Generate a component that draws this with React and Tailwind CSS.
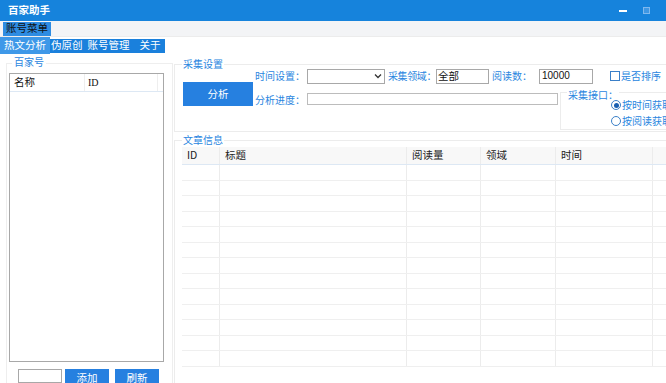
import React from "react";

const F = { fontFamily: '"Noto Sans CJK SC", "Microsoft YaHei", "Noto Sans", sans-serif' };

function Row({ header }) {
  const cells = header ? ["ID", "标题", "阅读量", "领域", "时间", ""] : ["", "", "", "", "", ""];
  const widths = ["w-[38px]", "w-[187px]", "w-[74px]", "w-[75px]", "w-[97px]", "flex-1"];
  return (
    <div className={`flex ${header ? "h-[18px] bg-[#f8f8f8] border-b border-[#dde8f4]" : "h-[15.5px] border-b border-[#efefef]"}`}>
      {cells.map((c, i) => (
        <div
          key={i}
          className={`${widths[i]} shrink-0 ${i < 5 ? "border-r border-[#ececec]" : ""} pl-[5px] flex items-center text-[10.5px] text-[#222] leading-none whitespace-nowrap`}
        >
          {c}
        </div>
      ))}
    </div>
  );
}

const lbl = "text-[10px] text-[#2a86e0] leading-none whitespace-nowrap";

export default function App() {
  return (
    <div className="w-[666px] h-[383px] overflow-hidden bg-white flex flex-col select-none" style={F}>
      {/* title bar */}
      <div className="h-[21px] bg-[#1683dc] flex items-center pl-[8px] shrink-0">
        <span className="text-white text-[10.5px] font-bold leading-none">百家助手</span>
        <div className="ml-auto flex items-center gap-[16px] mr-[16px]">
          <div className="w-[8px] h-[2px] bg-white" />
          <div className="w-[7px] h-[7px] border border-[#7fb8ee] bg-[#3e97e4]" />
        </div>
      </div>
      {/* menu bar */}
      <div className="h-[16px] bg-[#f3f4f6] flex items-center pl-[3px] shrink-0 border-b border-[#ececec]">
        <div className="h-[14px] px-[3px] bg-[#2e8ce2] flex items-center text-[10.5px] text-[#111] leading-none whitespace-nowrap">账号菜单</div>
      </div>
      {/* tab strip */}
      <div className="h-[17px] flex items-center shrink-0">
        <div className="h-[17px] w-[50px] bg-[#3e98e8] flex items-center justify-center text-white text-[10.5px] leading-none whitespace-nowrap">热文分析</div>
        <div className="h-[14px] w-[115px] bg-[#1a80dc] flex items-center gap-[5px] pl-[1px] text-white text-[10.5px] leading-none whitespace-nowrap">
          <span>伪原创</span>
          <span>账号管理</span>
          <span className="ml-[5px]">关于</span>
        </div>
      </div>
      {/* body */}
      <div className="flex-1 flex min-h-0">
        {/* left */}
        <div className="w-[174px] shrink-0 relative pl-[6px] pt-[9px]">
          <div className="h-full border border-[#eeeeee] border-b-0 mr-[1px] flex flex-col px-[2px] pt-[9px]">
            <div className="h-[291px] border border-[#a8a8a8] flex flex-col mr-[6px]">
              <div className="h-[18px] flex border-b border-[#dde8f4] bg-white">
                <div className="w-[75px] border-r border-[#eeeeee] flex items-center pl-[4px] text-[10.5px] text-[#111] leading-none">名称</div>
                <div className="w-[73px] border-r border-[#eeeeee] flex items-center pl-[3px] text-[10px] text-[#111] leading-none" style={{ fontFamily: '"Liberation Serif", serif' }}>ID</div>
              </div>
            </div>
            <div className="flex items-start gap-[3px] mt-[7px] pl-[9px]">
              <div className="w-[44px] h-[14px] border border-[#a8a8a8] bg-white" />
              <div className="w-[44px] h-[14px] bg-[#2680e0] text-white text-[10.5px] flex items-center justify-center leading-none pt-[4px]">添加</div>
              <div className="w-[44px] h-[14px] bg-[#2680e0] text-white text-[10.5px] flex items-center justify-center ml-[3px] leading-none pt-[4px]">刷新</div>
            </div>
          </div>
          <div className={`absolute left-[12px] top-[3px] bg-white px-[2px] ${lbl} text-[10.5px]`}>百家号</div>
        </div>
        {/* right */}
        <div className="flex-1 flex flex-col min-w-0">
          {/* 采集设置 */}
          <div className="relative mt-[10px] h-[68px] border border-[#ececec] border-r-0 flex">
            <div className={`absolute left-[7px] top-[-6px] bg-white px-[1px] ${lbl}`}>采集设置</div>
            <div className="w-[70px] h-[24px] bg-[#2680e0] text-white text-[10.5px] flex items-center justify-center mt-[17px] ml-[8px] shrink-0 leading-none">分析</div>
            <div className="flex flex-col ml-[2px] pt-[3px] flex-1">
              <div className="flex items-center h-[16px]">
                <span className={`${lbl} w-[52px]`}>时间设置：</span>
                <div className="w-[78px] h-[15px] border border-[#a8a8a8] bg-white flex items-center justify-end pr-[2px] shrink-0">
                  <svg width="8" height="6" viewBox="0 0 8 6"><path d="M1 1.5 L4 4.5 L7 1.5" fill="none" stroke="#333" strokeWidth="1.3" /></svg>
                </div>
                <span className={`${lbl} ml-[3px] tracking-[-0.4px]`}>采集领域：</span>
                <div className="w-[53px] h-[15px] border border-[#a8a8a8] bg-white flex items-center pl-[1px] text-[10.5px] text-[#111] leading-none shrink-0">全部</div>
                <span className={`${lbl} ml-[3px] w-[47px]`}>阅读数：</span>
                <div className="w-[54px] h-[15px] border border-[#a8a8a8] bg-white flex items-center pl-[2px] text-[10px] text-[#111] leading-none shrink-0" style={{ fontFamily: '"Liberation Sans", sans-serif' }}>10000</div>
                <div className="ml-[17px] flex items-center gap-[1px]">
                  <div className="w-[10px] h-[10px] border border-[#3a7fc8] bg-white shrink-0" />
                  <span className={`${lbl} text-[10.5px]`}>是否排序</span>
                </div>
              </div>
              <div className="flex items-start mt-[9px]">
                <span className={`${lbl} w-[52px] mt-[2px]`}>分析进度：</span>
                <div className="w-[251px] h-[12px] border border-[#bcbcbc] bg-white shrink-0" />
                <div className="relative ml-[2px] w-[107px] h-[38px] border border-[#ececec] border-r-0 mt-[-1px] shrink-0">
                  <div className={`absolute left-[6px] top-[-3px] bg-white px-[1px] ${lbl}`}>采集接口：</div>
                  <div className="absolute left-[50px] top-[7px] flex items-center gap-[1px]">
                    <div className="w-[10px] h-[10px] rounded-full border border-[#3a7fc8] bg-white flex items-center justify-center shrink-0">
                      <div className="w-[5px] h-[5px] rounded-full bg-[#1a5fb0]" />
                    </div>
                    <span className={lbl}>按时间获取</span>
                  </div>
                  <div className="absolute left-[50px] top-[23px] flex items-center gap-[1px]">
                    <div className="w-[10px] h-[10px] rounded-full border border-[#3a7fc8] bg-white shrink-0" />
                    <span className={lbl}>按阅读获取</span>
                  </div>
                </div>
              </div>
            </div>
          </div>
          {/* 文章信息 */}
          <div className="relative mt-[8px] flex-1 border border-[#ececec] border-r-0 border-b-0 pl-[7px] pt-[6px]">
            <div className={`absolute left-[7px] top-[-6px] bg-white px-[1px] ${lbl} text-[10.5px]`}>文章信息</div>
            <div className="flex flex-col">
              <Row header />
              {Array.from({ length: 13 }).map((_, i) => (
                <Row key={i} />
              ))}
            </div>
          </div>
        </div>
      </div>
    </div>
  );
}
